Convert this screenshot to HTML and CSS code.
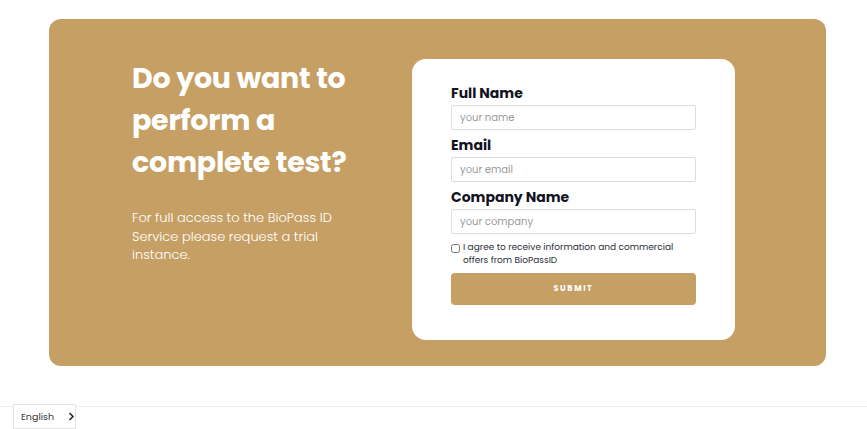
FILE: index.html
```html
<!DOCTYPE html>
<html lang="en">
<head>
<meta charset="utf-8">
<title>BioPass ID - Request a trial</title>
<link rel="stylesheet" href="styles.css">
</head>
<body>
<section class="cta">
  <div class="intro">
    <h1 class="title">Do you want to<br>perform a<br>complete test?</h1>
    <p class="lead">For full access to the BioPass ID<br>Service please request a trial<br>instance.</p>
  </div>
  <form class="form-card">
    <label class="label" for="name">Full Name</label>
    <input class="field" id="name" type="text" placeholder="your name">
    <label class="label" for="email">Email</label>
    <input class="field" id="email" type="email" placeholder="your email">
    <label class="label" for="company">Company Name</label>
    <input class="field" id="company" type="text" placeholder="your company">
    <div class="agree">
      <input class="check" type="checkbox" id="agree">
      <label for="agree" class="agree-text">I agree to receive information and commercial offers from BioPassID</label>
    </div>
    <button class="submit" type="button">SUBMIT</button>
  </form>
</section>
<footer class="footer">
  <div class="lang">
    <span>English</span>
    <svg class="chev" width="7" height="9" viewBox="0 0 7 9"><path d="M1.5 1 L5 4.5 L1.5 8" fill="none" stroke="#222" stroke-width="1.5"/></svg>
  </div>
</footer>
</body>
</html>
```
FILE: styles.css
```css
* { box-sizing: border-box; }
html, body { margin: 0; padding: 0; background: #fff; }
body { font-family: "Poppins", "Inter", "Noto Sans", sans-serif; width: 867px; height: 429px; overflow: hidden; }

.cta {
  margin: 19px 41px 0 49px;
  height: 347px;
  background: #c69f64;
  border-radius: 12px;
  display: flex;
  padding: 40px 91px 0 83px;
  justify-content: space-between;
}
.intro { width: 260px; color: #fff; margin-top: -2px; }
.title {
  margin: 0;
  font-size: 28.5px;
  line-height: 42px;
  font-weight: 700;
  letter-spacing: -0.25px;
  color: #fff;
}
.lead {
  margin: 26px 0 0;
  font-size: 13px;
  line-height: 18.5px;
  font-weight: 300;
  color: #fff;
}

.form-card {
  width: 323px;
  height: 281px;
  background: #fff;
  border-radius: 14px;
  padding: 24px 39px 0 39px;
  display: flex;
  flex-direction: column;
}
.label {
  font-size: 14px;
  line-height: 20px;
  font-weight: 700;
  color: #111322;
  margin-bottom: 2px;
}
.field {
  height: 25px;
  border: 1px solid #dcdcdc;
  border-radius: 2px;
  padding: 0 8px;
  font-family: inherit;
  font-size: 10px;
  margin: 0 0 5px;
  outline: none;
}
.field::placeholder { color: #9a9a9a; }
.agree { display: flex; align-items: flex-start; margin-top: 2px; }
.check {
  width: 9px; height: 9px; margin: 3px 3px 0 0; flex: none;
}
.agree-text {
  font-size: 9px;
  line-height: 13px;
  color: #2c2f3a;
}
.submit {
  margin-top: 6px;
  height: 32px;
  border: 0;
  border-radius: 4px;
  background: #c69f64;
  color: #fff;
  font-family: inherit;
  font-size: 8px;
  font-weight: 700;
  letter-spacing: 1.6px;
}

.footer {
  margin-top: 40px;
  border-top: 1px solid #ebebf0;
  padding-left: 13px;
}
.lang {
  margin-top: -3px;
  width: 63px;
  height: 25px;
  border: 1px solid #e3e3e3;
  background: #fff;
  display: flex;
  align-items: center;
  padding: 0 0 0 7px;
  gap: 14px;
  font-size: 9.5px;
  color: #333;
}
.chev { flex: none; }
```
